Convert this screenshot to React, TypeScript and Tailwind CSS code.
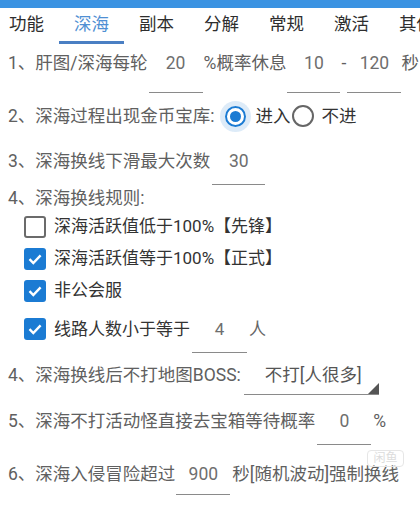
const tabs = ["功能", "深海", "副本", "分解", "常规", "激活", "其他"];

function Field({ value, w, pb }: { value: string; w: string; pb: string }) {
  return (
    <div className={`${w} ${pb} border-b-[1.5px] border-[#8a8a8a] text-center leading-[38px] text-[#6e6e6e]`}>
      {value}
    </div>
  );
}

function Check({ checked }: { checked: boolean }) {
  return checked ? (
    <div className="w-[22px] h-[22px] rounded-[3px] bg-[#1b7bd3] flex items-center justify-center shrink-0">
      <svg width="16" height="16" viewBox="0 0 16 16">
        <path d="M2.5 8.2 L6.3 12 L13.6 4.4" fill="none" stroke="#fff" strokeWidth="2.4" />
      </svg>
    </div>
  ) : (
    <div className="w-[22px] h-[22px] rounded-[3px] border-2 border-[#6b6b6b] shrink-0" />
  );
}

export default function App() {
  return (
    <div
      className="relative w-[420px] h-[508px] overflow-hidden bg-white text-[17.5px] text-[#606060]"
      style={{ fontFamily: "Roboto, 'Noto Sans CJK SC', sans-serif" }}
    >
      <div className="h-[8px] bg-[#3b93e2]" />
      {/* tabs */}
      <div className="flex -ml-[6px] whitespace-nowrap">
        {tabs.map((t, i) => (
          <div
            key={t}
            className={`w-[65px] h-[36px] shrink-0 flex items-center justify-center border-b-[3px] ${
              i === 1 ? "border-[#4a7fc3] text-[#4f8fd3]" : "border-transparent text-[#2e2e2e]"
            }`}
          >
            {t}
          </div>
        ))}
      </div>

      {/* 1 */}
      <div className="flex items-start pl-[8px] whitespace-nowrap">
        <span className="leading-[38px]">1、肝图/深海每轮</span>
        <div className="ml-[1px]"><Field value="20" w="w-[54px]" pb="pb-[10px]" /></div>
        <span className="leading-[38px] ml-[1px]">%概率休息</span>
        <div className="ml-[1px]"><Field value="10" w="w-[53px]" pb="pb-[10px]" /></div>
        <span className="leading-[38px] w-[7px] text-center">-</span>
        <Field value="120" w="w-[54px]" pb="pb-[10px]" />
        <span className="leading-[38px]">秒</span>
      </div>

      {/* 2 */}
      <div className="flex items-center h-[46px] pl-[8px] whitespace-nowrap">
        <span>2、深海过程出现金币宝库:</span>
        <div className="ml-[10px] w-[21px] h-[21px] rounded-full border-2 border-[#1b7bd3] ring-[5px] ring-[#1b7bd3]/15 flex items-center justify-center">
          <div className="w-[11px] h-[11px] rounded-full bg-[#1b7bd3]" />
        </div>
        <span className="ml-[10px] text-[#333]">进入</span>
        <div className="ml-[1px] w-[22px] h-[22px] rounded-full border-2 border-[#666]" />
        <span className="ml-[8px] text-[#333]">不进</span>
      </div>

      {/* 3 */}
      <div className="flex items-start pl-[8px] mt-[3px] whitespace-nowrap">
        <span className="leading-[38px]">3、深海换线下滑最大次数</span>
        <div className="ml-[2px]"><Field value="30" w="w-[53px]" pb="pb-[4px]" /></div>
      </div>

      {/* 4 */}
      <div className="pl-[8px] leading-[26px]">4、深海换线规则:</div>
      <div className="text-[17px] text-[#333]">
        <div className="flex items-center h-[32px] pl-[24px] gap-[8px]">
          <Check checked={false} />
          <span>深海活跃值低于100%【先锋】</span>
        </div>
        <div className="flex items-center h-[32px] pl-[24px] gap-[8px]">
          <Check checked />
          <span>深海活跃值等于100%【正式】</span>
        </div>
        <div className="flex items-center h-[32px] pl-[24px] gap-[8px]">
          <Check checked />
          <span>非公会服</span>
        </div>
        <div className="flex items-start mt-[3px] pl-[24px] whitespace-nowrap">
          <div className="h-[38px] flex items-center">
            <Check checked />
          </div>
          <span className="ml-[8px] leading-[38px]">线路人数小于等于</span>
          <div className="ml-[2px]"><Field value="4" w="w-[55px]" pb="pb-[4px]" /></div>
          <span className="ml-[2px] leading-[38px] text-[#666]">人</span>
        </div>
      </div>

      {/* 4 boss */}
      <div className="flex items-start pl-[8px] mt-[3px] whitespace-nowrap">
        <span className="leading-[38px]">4、深海换线后不打地图BOSS:</span>
        <div className="relative ml-[3px] w-[135px] h-[39px] border-b-[1.5px] border-[#8a8a8a] pl-[21px] leading-[38px] text-[#555]">
          不打[人很多]
          <svg className="absolute right-0 bottom-0" width="11" height="11" viewBox="0 0 11 11">
            <polygon points="11,0 11,11 0,11" fill="#555" />
          </svg>
        </div>
      </div>

      {/* 5 */}
      <div className="flex items-start pl-[8px] mt-[7px] whitespace-nowrap">
        <span className="leading-[38px]">5、深海不打活动怪直接去宝箱等待概率</span>
        <div className="ml-[2px]"><Field value="0" w="w-[54px]" pb="pb-[4px]" /></div>
        <span className="ml-[2px] leading-[38px]">%</span>
      </div>

      {/* 6 */}
      <div className="flex items-start pl-[8px] mt-[10px] whitespace-nowrap">
        <span className="leading-[38px]">6、深海入侵冒险超过</span>
        <div className="ml-[1px]"><Field value="900" w="w-[54px]" pb="pb-[1px]" /></div>
        <span className="ml-[2px] leading-[38px]">秒[随机波动]强制换线</span>
      </div>

      {/* watermark */}
      <div className="absolute left-[367px] top-[450px] w-[37px] h-[17px] rounded-[4px] border border-[#e6e6e6] text-[12px] leading-[15px] text-center text-[#dcdcdc]">
        闲鱼
      </div>
    </div>
  );
}
